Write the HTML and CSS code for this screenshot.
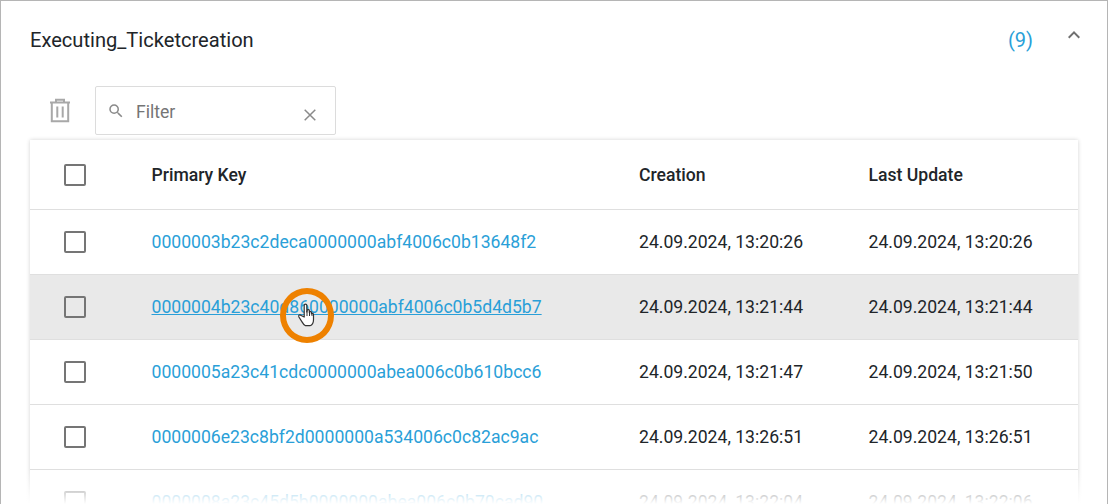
FILE: index.html
```html
<!DOCTYPE html>
<html lang="en">
<head>
<meta charset="utf-8">
<title>Executing_Ticketcreation</title>
<link rel="stylesheet" href="styles.css">
</head>
<body>
<main class="panel">
  <header class="panel-head">
    <h2 class="title">Executing_Ticketcreation</h2>
    <span class="count">(9)</span>
    <svg class="chevron" width="24" height="24" viewBox="0 0 24 24"><path d="M7.41 15.41 12 10.83l4.59 4.58L18 14l-6-6-6 6z"/></svg>
  </header>
  <div class="toolbar">
    <svg class="trash" width="30" height="30" viewBox="0 0 30 30"><path d="M5 6.500h20M11 6V3.800h8V6M6.800 7v18.200h16.400V7M12.300 10.500v11M17.700 10.500v11" fill="none" stroke="#a8a8a8" stroke-width="2"/></svg>
    <div class="filter">
      <svg class="search" width="18" height="18" viewBox="0 0 24 24"><path d="M15.5 14h-.79l-.28-.27A6.47 6.47 0 0 0 16 9.5 6.500 6.500 0 1 0 9.500 16c1.610 0 3.090-.59 4.230-1.570l.27.28v.79l5 4.990L20.490 19l-4.990-5zm-6 0C7.010 14 5 11.990 5 9.500S7.010 5 9.500 5 14 7.010 14 9.500 11.990 14 9.500 14z"/></svg>
      <span class="filter-text">Filter</span>
      <svg class="clear" width="12" height="12" viewBox="0 0 12 12"><path d="M.7.7l10.600 10.600M11.300.7.7 11.300" fill="none" stroke="#8a8a8a" stroke-width="1.500"/></svg>
    </div>
  </div>
  <section class="table">
    <div class="row head">
      <span class="box"></span><span>Primary Key</span><span>Creation</span><span>Last Update</span>
    </div>
    <div class="row">
      <span class="box"></span><a class="key">0000003b23c2deca0000000abf4006c0b13648f2</a><span>24.09.2024, 13:20:26</span><span>24.09.2024, 13:20:26</span>
    </div>
    <div class="row hover">
      <span class="box"></span><a class="key">0000004b23c40d860000000abf4006c0b5d4d5b7</a><span>24.09.2024, 13:21:44</span><span>24.09.2024, 13:21:44</span>
    </div>
    <div class="row">
      <span class="box"></span><a class="key">0000005a23c41cdc0000000abea006c0b610bcc6</a><span>24.09.2024, 13:21:47</span><span>24.09.2024, 13:21:50</span>
    </div>
    <div class="row">
      <span class="box"></span><a class="key">0000006e23c8bf2d0000000a534006c0c82ac9ac</a><span>24.09.2024, 13:26:51</span><span>24.09.2024, 13:26:51</span>
    </div>
    <div class="row">
      <span class="box"></span><a class="key">0000008a23c45d5b0000000abea006c0b70cad90</a><span>24.09.2024, 13:22:04</span><span>24.09.2024, 13:22:06</span>
    </div>
  </section>
  <div class="fade"></div>
  <div class="cursor-ring">
    <svg width="20" height="26" viewBox="0 0 20 26"><path d="M7.200 15V3.600c0-2 2.600-2 2.600 0V10l.3-1.400c.4-1.500 2.400-1.200 2.300.3l-.1 1.500c.4-1.300 2.300-1 2.200.4l-.1 1.200c.5-1.100 2.200-.7 2.100.7v5c0 3-1.500 5.300-3.500 6H8.500c-1.500-.7-2.500-2-3.500-3.800L1.900 15c-.8-1.800 1-2.800 2.300-1.500z" fill="#fff" stroke="#333" stroke-width="1.200" stroke-linejoin="round"/><path d="M10 9v5M12.500 9.500V14M15 11v3" stroke="#333" stroke-width="1"/></svg>
  </div>
</main>
</body>
</html>
```
FILE: styles.css
```css
* { box-sizing: border-box; }
html, body { margin: 0; padding: 0; background: #fff; }
body { font-family: Roboto, "Liberation Sans", sans-serif; font-size: 17.6px; color: #212529; }
.panel {
  position: relative;
  width: 1108px;
  height: 504px;
  overflow: hidden;
  border: 1px solid #b5b5b5;
  border-bottom: 0;
  padding: 0 29px;
}
.panel-head { display: flex; align-items: center; height: 78px; }
.title { margin: 0; flex: 1; font-size: 20.1px; font-weight: 400; line-height: 24px; }
.count { font-size: 20px; color: #2a9fd8; margin-right: 29px; }
.chevron { fill: #707070; margin-right: -8px; margin-top: -11px; }
.toolbar { display: flex; align-items: center; height: 49px; margin-top: 7px; padding-left: 15px; }
.trash { flex: none; }
.filter {
  display: flex;
  align-items: center;
  width: 241px;
  height: 49px;
  margin-left: 20px;
  padding-left: 11px;
  border: 1px solid #dcdcdc;
  border-radius: 2px;
}
.search { fill: #8a8a8a; flex: none; }
.filter-text { margin-left: 11px; margin-top: 2px; flex: 1; color: #757575; }
.clear { flex: none; margin-right: 19px; margin-top: 9px; }
.table {
  margin-top: 5px;
  background: #fff;
  box-shadow: 0 0 4px rgba(0, 0, 0, 0.18);
}
.row {
  display: grid;
  grid-template-columns: 87.5px 487.5px 229.5px 1fr;
  align-items: center;
  height: 65px;
  padding-left: 34px;
  border-bottom: 1px solid #dfdfdf;
}
.row.head { height: 70px; font-weight: 500; }
.row.hover { background: #e9e9e9; }
.row.hover .key { text-decoration: underline; }
.box {
  display: block;
  width: 22px;
  height: 22px;
  border: 2px solid #757575;
  border-radius: 2px;
  background: #fff;
}
.hover .box { background: #e9e9e9; }
.key { color: #2a9fd8; }
.fade {
  position: absolute;
  left: -1px;
  right: -1px;
  bottom: 0;
  height: 34px;
  background: linear-gradient(to bottom, rgba(255, 255, 255, 0), rgba(255, 255, 255, 0.75) 70%, #fff);
}
.cursor-ring {
  position: absolute;
  left: 279px;
  top: 287px;
  width: 54px;
  height: 55px;
  border: 6px solid #ee8100;
  border-radius: 50%;
}
.cursor-ring svg { position: absolute; left: 11px; top: 8px; }
```
